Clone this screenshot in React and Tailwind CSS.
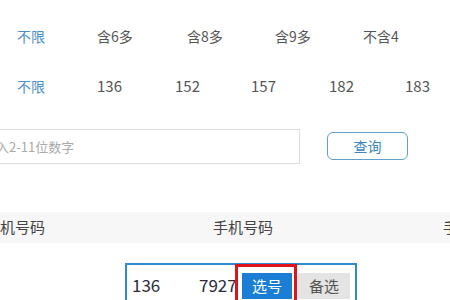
export default function App() {
  const font = { fontFamily: '"Noto Sans CJK SC", "Liberation Sans", sans-serif' };
  const row1 = [
    { t: "不限", w: "w-[80px]", on: true },
    { t: "含6多", w: "w-[90px]" },
    { t: "含8多", w: "w-[88px]" },
    { t: "含9多", w: "w-[88px]" },
    { t: "不含4", w: "w-[60px]" },
  ];
  const row2 = [
    { t: "不限", w: "w-[80px]", on: true },
    { t: "136", w: "w-[78px]" },
    { t: "152", w: "w-[76px]" },
    { t: "157", w: "w-[78px]" },
    { t: "182", w: "w-[76px]" },
    { t: "183", w: "w-[40px]" },
  ];

  return (
    <div className="relative h-[300px] w-[450px] overflow-hidden bg-white" style={font}>
      <div className="mt-[11px] flex h-[50px] items-center pl-[17px] text-[14px] text-[#555]">
        {row1.map((r) => (
          <span key={r.t} className={`${r.w} shrink-0 ${r.on ? "text-[#4a8fc6]" : ""}`}>
            {r.t}
          </span>
        ))}
      </div>
      <div className="flex h-[50px] items-center pl-[17px] text-[14px] text-[#555]">
        {row2.map((r) => (
          <span
            key={r.t + r.w}
            className={`${r.w} shrink-0 ${r.on ? "text-[#4a8fc6]" : "text-[15px]"}`}
          >
            {r.t}
          </span>
        ))}
      </div>

      <div className="mt-[18px] flex items-start">
        <div className="flex h-[35px] w-[300px] items-center overflow-hidden border border-l-0 border-[#dcdcdc] text-[13px] text-[#aaa]">
          <span className="-ml-[4px]">入2-11位数字</span>
        </div>
        <button className="ml-[27px] mt-[3px] h-[28px] w-[81px] rounded-[6px] border border-[#5f9fc9] text-[14px] text-[#3a85bd]">
          查询
        </button>
      </div>

      <div className="mt-[48px] flex h-[31px] items-center bg-[#f7f7f7] text-[15px] text-[#444]">
        <span className="w-[213px] shrink-0">机号码</span>
        <span className="w-[230px] shrink-0">手机号码</span>
        <span className="shrink-0">手</span>
      </div>

      <div className="relative ml-[125px] mt-[20px] flex h-[60px] w-[232px] items-start border-2 border-[#2f8ad0] pl-[5px] pt-[8px] text-[17px] text-[#2b2b3a]">
        <span className="w-[67px] shrink-0 leading-[24px]">136</span>
        <span className="w-[43px] shrink-0 overflow-hidden whitespace-nowrap leading-[24px]">7927</span>
        <span className="flex h-[26px] w-[50px] shrink-0 items-center justify-center bg-[#1a7fd4] text-[15px] text-white">
          选号
        </span>
        <span className="ml-[6px] flex h-[26px] w-[52px] shrink-0 items-center justify-center bg-[#e4e4e4] text-[15px] text-[#555]">
          备选
        </span>
        <div className="absolute left-[108px] top-[-1px] h-[40px] w-[62px] border-[3px] border-[#e0121b]" />
      </div>
    </div>
  );
}
